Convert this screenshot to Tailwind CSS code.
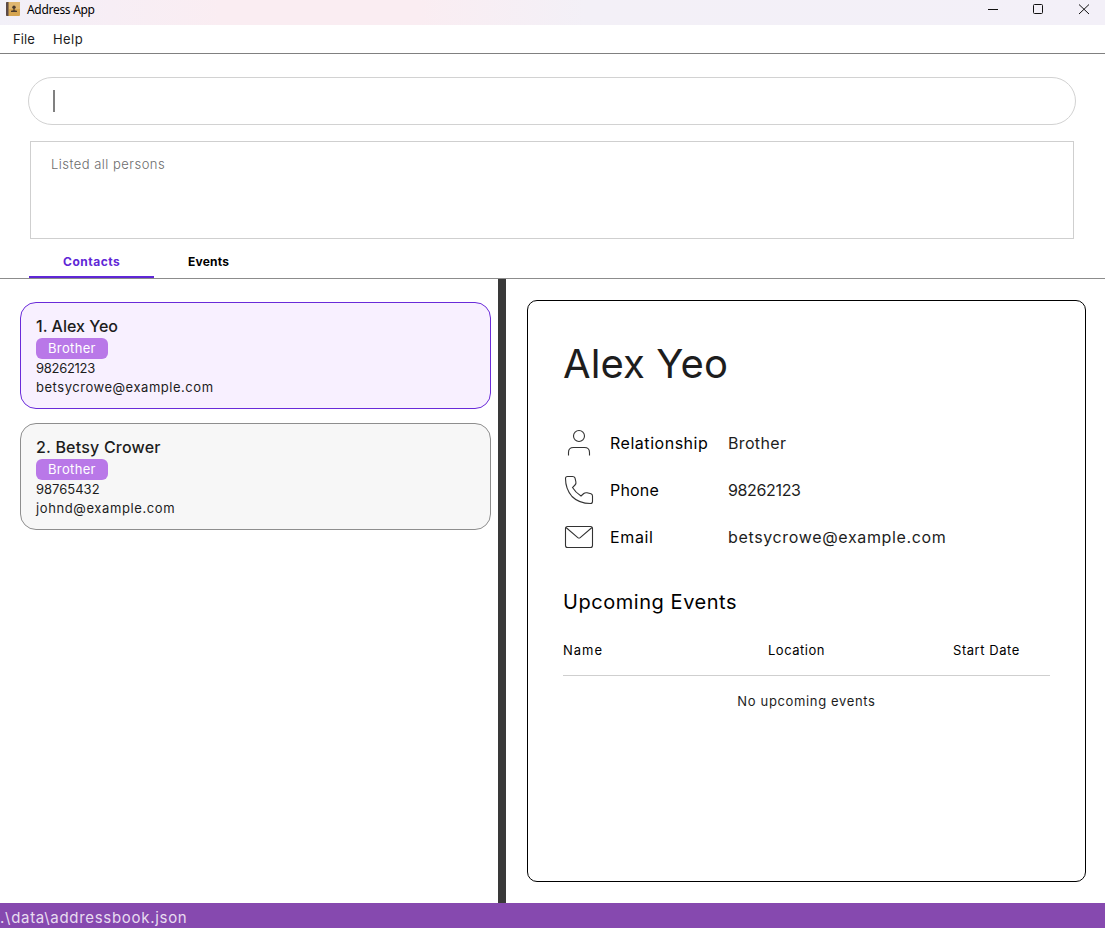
<!DOCTYPE html>
<html lang="en"><head><meta charset="utf-8"><title>Address App</title>
<script src="https://cdn.jsdelivr.net/npm/@tailwindcss/browser@4"></script></head>
<body class="w-[1105px] h-[928px] overflow-hidden bg-white font-['Inter',sans-serif] text-[#1d1d1d] flex flex-col">
<header class="h-[25px] shrink-0 flex items-start bg-[linear-gradient(90deg,#f2f0f8_0%,#f7eef5_10%,#faedf2_20%,#faedf2_38%,#f3f0f7_53%,#f3f0f8_100%)] text-black">
  <svg class="ml-[6px] mt-[2px]" width="14" height="14" viewBox="0 0 14 14"><rect width="14" height="14" rx="1" fill="#d6a550"/><rect x="3" width="11" height="7" fill="#dfb670"/><path d="M0 1Q0 0 1 0H2.500V14H1Q0 14 0 13Z" fill="#5b4a48"/><circle cx="8" cy="5.200" r="1.700" fill="#4b3a2c"/><path d="M7.400 6.500h1.200v1.700l2.400.6V10H5V8.800l2.400-.6Z" fill="#4b3a2c"/></svg>
  <span class="ml-[7px] mt-[1px] font-['Noto_Sans',sans-serif] text-[12px] leading-[18px] tracking-[-0.3px]">Address App</span>
  <svg class="ml-auto" width="125" height="25" viewBox="0 0 125 25" fill="none" stroke="#111"><path d="M8 9.500H18"/><rect x="53.500" y="4.500" width="9" height="9" rx="1"/><path d="M99 4.500L109 14M109 4.500L99 14"/></svg>
</header>
<nav class="h-[29px] shrink-0 border-b border-[#808080] pl-[13px] pt-[2px] flex gap-[18px] items-center text-[13px]"><span class="tracking-[0.1px]">File</span><span class="tracking-[0.45px]">Help</span></nav>
<section class="h-[225px] shrink-0 border-b border-[#8c8c8c] pt-[23px] pl-7 flex flex-col">
  <div class="w-[1048px] h-12 rounded-full border border-[#d2d2d2] flex items-center pl-6"><div class="w-[2px] h-[22px] bg-[#808080]"></div></div>
  <div class="ml-[2px] mt-4 w-[1044px] h-[98px] border border-[#cfcfcf] pl-5 pt-3 text-[13px] leading-5 font-light text-[#6c6c6c] tracking-[0.48px]">Listed all persons</div>
  <div class="ml-px mt-[7px] flex h-8 text-[12px] font-bold leading-[32px]"><div class="w-[125px] border-b-2 border-[#5f27d6] text-[#5f27d6] pl-[34px] tracking-[0.5px]">Contacts</div><div class="pl-[34px] text-black tracking-[0.2px]">Events</div></div>
</section>
<main class="h-[624px] shrink-0 flex">
  <div class="w-[498px] pt-[23px] pl-5 flex flex-col gap-[14px]">
    <article class="w-[471px] h-[107px] rounded-[16px] border border-[#6a2bd9] bg-[#f8f0ff] pl-[15px] pt-[11px] text-[13px] leading-[19px]">
      <h2 class="text-[16px] font-medium leading-6 tracking-[0px]">1. Alex Yeo</h2>
      <div class="w-[72px] h-[21px] rounded-[6px] bg-[#b978e8] text-white pl-3 leading-[21px] tracking-[0.35px]">Brother</div>
      <p class="tracking-[-0.3px]">98262123</p><p class="tracking-[0.53px]">betsycrowe@example.com</p>
    </article>
    <article class="w-[471px] h-[107px] rounded-[16px] border border-[#8e8e8e] bg-[#f7f7f7] pl-[15px] pt-[11px] text-[13px] leading-[19px]">
      <h2 class="text-[16px] font-medium leading-6 tracking-[0.2px]">2. Betsy Crower</h2>
      <div class="w-[72px] h-[21px] rounded-[6px] bg-[#b978e8] text-white pl-3 leading-[21px] tracking-[0.35px]">Brother</div>
      <p>98765432</p><p class="tracking-[0.6px]">johnd@example.com</p>
    </article>
  </div>
  <div class="w-2 bg-[#393939]"></div>
  <div class="pt-[21px] pl-[21px]">
    <article class="w-[559px] h-[582px] rounded-[10px] border border-black pl-[35px] pt-[34px] text-black">
      <h1 class="text-[40px] leading-[58px] text-[#1d1d1d] tracking-[0.1px]">Alex Yeo</h1>
      <div class="mt-[27px] grid grid-cols-[47px_118px_1fr] auto-rows-[47px] items-center text-[16px]">
        <svg width="32" height="33" viewBox="0 0 32 33" fill="none" stroke="#333" stroke-width="1.1"><circle cx="16" cy="9" r="5.500"/><path d="M5.500 28.500V25.500Q5.500 20.500 10.500 20.500H21.500Q26.500 20.500 26.500 25.500V28.500"/></svg><span class="pb-[2px] tracking-[0.53px]">Relationship</span><span class="pb-[2px] text-[#1d1d1d] tracking-[0.35px]">Brother</span>
        <svg width="32" height="33" viewBox="0 0 32 33" fill="none" stroke="#333" stroke-width="1.1"><path d="M4.500 2.500H9.500Q11.500 2.500 12 4L12.900 8Q13.300 9.800 12 11L9.500 13.500Q12.500 18.500 18 22L20.800 19.500Q22 18.500 24 18.800L28 19.700Q29.500 20.200 29.500 22V27.500Q29.500 29.500 27.500 29.500Q16 29.500 9 22.500Q2.500 15 2.500 4.500Q2.500 2.500 4.500 2.500Z"/></svg><span class="pb-[2px] tracking-[0.2px]">Phone</span><span class="pb-[2px] text-[#1d1d1d] tracking-[-0.35px]">98262123</span>
        <svg width="32" height="33" viewBox="0 0 32 33" fill="none" stroke="#333" stroke-width="1.1"><rect x="2.500" y="5.500" width="27" height="21" rx="2"/><path d="M3 6.500L14.800 16.600Q16 17.500 17.200 16.600L29 6.500"/></svg><span class="pb-[2px] tracking-[0.65px]">Email</span><span class="pb-[2px] text-[#1d1d1d] tracking-[0.65px]">betsycrowe@example.com</span>
      </div>
      <h2 class="mt-[25px] text-[20px] leading-8 tracking-[0.55px]">Upcoming Events</h2>
      <div class="mt-[22px] w-[487px] h-[36px] border-b border-[#cfcfcf] grid grid-cols-[205px_185px_1fr] text-[13px] leading-5"><span class="tracking-[1px]">Name</span><span class="tracking-[0.5px]">Location</span><span class="tracking-[0.55px]">Start Date</span></div>
      <p class="w-[487px] mt-[15px] text-center text-[13px] leading-5 text-[#1d1d1d] tracking-[0.65px]">No upcoming events</p>
    </article>
  </div>
</main>
<footer class="h-[25px] shrink-0 bg-[#8649af] text-[#e8dcf0] text-[15px] leading-[29px] tracking-[0.7px]">.\data\addressbook.json</footer>
</body></html>
